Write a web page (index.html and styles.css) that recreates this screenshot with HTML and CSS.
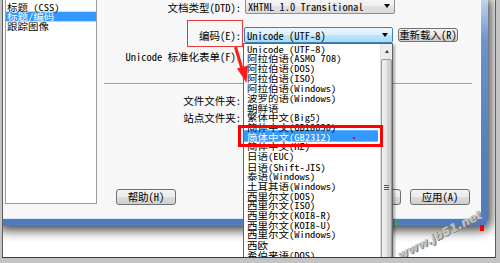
FILE: index.html
```html
<!DOCTYPE html>
<html>
<head>
<meta charset="utf-8">
<link rel="stylesheet" href="styles.css">
</head>
<body>
<div class="screen">
  <div class="desk">
    <div class="win">
      <div class="dlg">
        <div class="side">
          <ul class="items">
            <li>标题 (CSS)</li>
            <li class="sel">标题/编码</li>
            <li>跟踪图像</li>
          </ul>
        </div>
        <div class="main">
          <div class="row r1"><span class="lbl">文档类型(DTD):</span><span class="combo c1">XHTML 1.0 Transitional<i class="caret"></i></span></div>
          <div class="row r2"><span class="lbl">编码(E):</span><span class="combo c2">Unicode (UTF-8)<i class="caret"></i></span><button class="btn reload">重新载入(R)</button></div>
          <div class="row r3"><span class="lbl">Unicode 标准化表单(F):</span></div>
          <div class="sep"></div>
          <div class="row r4"><span class="lbl">文件文件夹:</span></div>
          <div class="row r5"><span class="lbl">站点文件夹:</span></div>
          <div class="btns">
            <button class="btn">帮助(H)</button>
            <div class="grp"><button class="btn">取消</button><button class="btn">应用(A)</button></div>
          </div>
        </div>
      </div>
    </div>

    <div class="drop">
      <ul class="opts">
        <li>Unicode (UTF-8)</li>
        <li>阿拉伯语(ASMO 708)</li>
        <li>阿拉伯语(DOS)</li>
        <li>阿拉伯语(ISO)</li>
        <li>阿拉伯语(Windows)</li>
        <li>波罗的语(Windows)</li>
        <li>朝鲜语</li>
        <li>繁体中文(Big5)</li>
        <li>简体中文(GB18030)</li>
        <li class="sel">简体中文(GB2312)</li>
        <li>简体中文(HZ)</li>
        <li>日语(EUC)</li>
        <li>日语(Shift-JIS)</li>
        <li>泰语(Windows)</li>
        <li>土耳其语(Windows)</li>
        <li>西里尔文(DOS)</li>
        <li>西里尔文(ISO)</li>
        <li>西里尔文(KOI8-R)</li>
        <li>西里尔文(KOI8-U)</li>
        <li>西里尔文(Windows)</li>
        <li>西欧</li>
        <li>希伯来语(DOS)</li>
      </ul>
      <div class="sb">
        <div class="up"><i class="tri"></i></div>
        <div class="thumb"><i class="grip"></i></div>
      </div>
    </div>

    <div class="mark-box1"></div>
    <div class="mark-box2"></div>
    <i class="mark-dot"></i>
    <svg class="arrow" viewBox="229 44 24 42" width="24" height="42">
      <line x1="235.5" y1="47" x2="242" y2="69" stroke="#ff1a1a" stroke-width="3"/>
      <polygon points="246.5,83 237,68.5 248,65.5" fill="#ff1a1a"/>
    </svg>
    <i class="mark-green"></i>
    <i class="mark-red"></i>
    <span class="wm">www.jb51.net</span>
  </div>
</div>
</body>
</html>
```

FILE: styles.css
```css
* { box-sizing: border-box; }
body { margin: 0; }
ul { margin: 0; padding: 0; list-style: none; }

.screen {
  width: 500px;
  height: 263px;
  overflow: hidden;
  background: #c4c4c4;
  font-family: "Noto Sans Mono CJK SC", "Liberation Mono", "Noto Sans CJK SC", monospace;
  font-size: 10.5px;
  color: #000;
}

.desk {
  position: relative;
  margin-left: 2px;
  width: 494px;
  height: 258px;
  border-left: 1px solid #5e5e5e;
  border-right: 1px solid #5e5e5e;
  border-bottom: 1px solid #3c3c3c;
  background: #fff;
  overflow: hidden;
}

.win {
  width: 485px;
  height: 226px;
  padding: 0 7px 7px 0;
  border-bottom-right-radius: 6px;
  background: linear-gradient(#c4d4ea, #6a93cf 18%, #5683c6 60%, #4c7bc0);
  box-shadow: 0 1px 12px 3px rgba(0, 0, 0, 0.78);
}

.dlg {
  display: flex;
  height: 100%;
  background: #f7f7f7;
  border-right: 1px solid #fafcff;
  border-bottom: 1px solid #d9e3f0;
}

.side {
  width: 92px;
  height: 204px;
  margin: 0 3px 0 2px;
  padding-top: 2px;
  background: #fff;
  border: 1px solid #9a9ca2;
  border-top: none;
  overflow: hidden;
}
/* list text in the shot is squashed vertically */
.items {
  transform: scaleY(0.88);
  transform-origin: 0 0;
}
.items li {
  height: 11.14px;
  line-height: 11.14px;
  padding-left: 1px;
  white-space: nowrap;
}
.items .sel { background: #3399ff; color: #fff; }

.main {
  flex: 1;
  display: flex;
  flex-direction: column;
}

.row {
  display: flex;
  align-items: center;
  gap: 3px;
  height: 14px;
}
.lbl {
  width: 141px;
  flex: none;
  text-align: right;
  white-space: nowrap;
}
.r2 { margin-top: 13px; height: 16px; }
.r3 { margin-top: 6px; }
.r4 { margin-top: 8px; }
.r5 { margin-top: 3px; }

.combo {
  display: flex;
  align-items: center;
  justify-content: space-between;
  height: 16px;
  padding: 0 4px 0 2px;
  border-radius: 2px;
  white-space: nowrap;
}
.c1 {
  width: 150px;
  margin: -2px 0 0 1px;
  border: 1px solid #8e8f8f;
  background: linear-gradient(#f6f6f6, #efefef 50%, #e3e3e3 50%, #dadada);
}
.c2 {
  width: 149px;
  border: 1px solid #3c7fb1;
  background: linear-gradient(#eaf6fd, #d9f0fc 50%, #bee6fd 50%, #a7d9f5);
}
.caret {
  width: 0;
  height: 0;
  border-left: 3.5px solid transparent;
  border-right: 3.5px solid transparent;
  border-top: 4px solid #000;
}

.btn {
  font: inherit;
  color: #000;
  height: 16px;
  width: 60px;
  padding: 0;
  border: 1px solid #707070;
  border-radius: 3px;
  background: linear-gradient(#f2f2f2, #ebebeb 50%, #dddddd 50%, #cfcfcf);
  white-space: nowrap;
  line-height: 14px;
}
.reload { height: 14px; margin-left: 2px; line-height: 12px; }

.sep {
  height: 2px;
  margin: 20px 8px 0 4px;
  border-top: 1px solid #a0a0a0;
  border-bottom: 1px solid #fff;
}

.btns {
  display: flex;
  margin-top: 65px;
  padding: 0 10px 0 16px;
}
.grp { display: flex; gap: 9px; margin-left: auto; }

/* open drop-down list */
.drop {
  position: absolute;
  left: 240px;
  top: 43px;
  width: 150px;
  height: 230px;
  display: flex;
  background: #fff;
  border: 1px solid #646464;
  box-shadow: 2px 2px 2px rgba(0, 0, 0, 0.3);
}
.opts {
  flex: 1;
  margin-right: 2px;
  transform: scaleY(0.88);
  transform-origin: 0 0;
}
.opts li {
  height: 11.14px;
  line-height: 11.14px;
  padding-left: 3px;
  white-space: nowrap;
}
.opts .sel {
  background: #3399ff;
  color: #fff;
  box-shadow: 0 -2px 0 #3399ff;
}
.sb {
  width: 12px;
  display: flex;
  flex-direction: column;
  background: #ececec;
  border-left: 1px solid #e2e2e2;
}
.up {
  height: 15px;
  display: flex;
  justify-content: center;
  align-items: center;
}
.tri {
  width: 0;
  height: 0;
  border-left: 2.5px solid transparent;
  border-right: 2.5px solid transparent;
  border-bottom: 3px solid #3a3a3a;
}
.thumb {
  flex: 1;
  display: flex;
  justify-content: center;
  border: 1px solid #979797;
  border-radius: 2px;
  background: linear-gradient(90deg, #f3f3f3, #e7e7e7 50%, #d6d6d6 50%, #cdcdcd);
}
.grip {
  width: 5px;
  height: 5px;
  margin-top: 125px;
  background: repeating-linear-gradient(#555 0 1px, transparent 1px 2px);
}

/* annotations drawn over the screenshot */
.mark-box1 {
  position: absolute;
  left: 184px;
  top: 20px;
  width: 56px;
  height: 27px;
  border: 1px solid #e8383a;
}
.mark-box2 {
  position: absolute;
  left: 235px;
  top: 125px;
  width: 145px;
  height: 22px;
  border: 3px solid #ff0000;
}
.mark-dot {
  position: absolute;
  left: 350px;
  top: 137px;
  width: 2px;
  height: 2px;
  background: #ff0000;
}
.arrow { position: absolute; left: 226px; top: 44px; }
.mark-green {
  position: absolute;
  left: 392px;
  top: 219px;
  width: 2px;
  height: 7px;
  background: #2fae3c;
}
.mark-red {
  position: absolute;
  left: 477px;
  top: 225px;
  width: 4px;
  height: 6px;
  background: #ff0000;
}
.wm {
  position: absolute;
  left: 390px;
  top: 228px;
  font-family: "DejaVu Sans", sans-serif;
  font-size: 12px;
  font-style: italic;
  font-weight: bold;
  color: #c2c2c2;
  text-shadow: 1px 1px 0 #808080;
  transform: rotate(-27deg);
  white-space: nowrap;
}
```
